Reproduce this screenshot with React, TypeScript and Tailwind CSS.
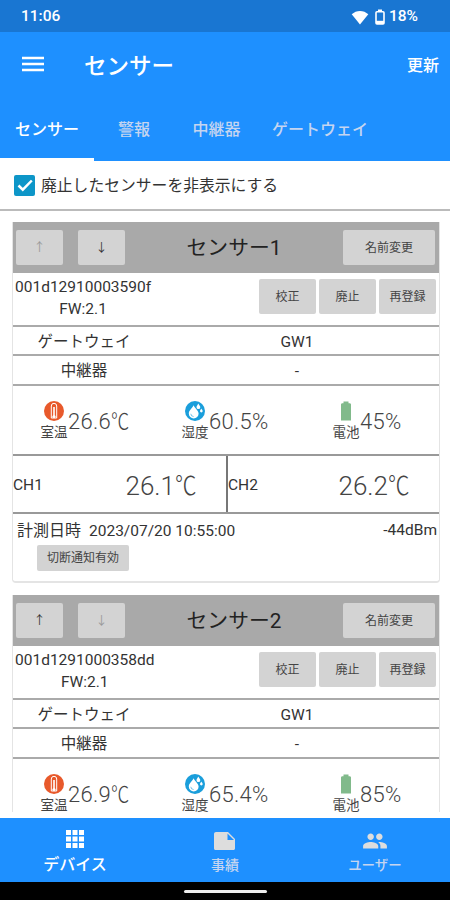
import type { ReactNode } from 'react'
import clsx from 'clsx'

type Sensor = {
  id: string
  name: string
  fw: string
  gateway: string
  relay: string
  temperature: string
  humidity: string
  battery: string
  channels?: string[]
  measuredAt?: string
  rssi?: string
}

const sensors: Sensor[] = [
  {
    id: '001d12910003590f',
    name: 'センサー1',
    fw: '2.1',
    gateway: 'GW1',
    relay: '-',
    temperature: '26.6',
    humidity: '60.5',
    battery: '45',
    channels: ['26.1', '26.2'],
    measuredAt: '2023/07/20 10:55:00',
    rssi: '-44dBm',
  },
  {
    id: '001d1291000358dd',
    name: 'センサー2',
    fw: '2.1',
    gateway: 'GW1',
    relay: '-',
    temperature: '26.9',
    humidity: '65.4',
    battery: '85',
  },
]

const ThermometerIcon = () => (
  <svg viewBox="0 0 20 20" className="size-5">
    <circle cx="10" cy="10" r="10" fill="#e8592b" />
    <path d="M7.300 17V5a2.700 2.700 0 0 1 5.400 0v12z" fill="#e8592b" stroke="#fff" strokeWidth="1" />
    <path d="M9.200 6h1.600v8.200a1.600 1.600 0 1 1-1.600 0z" fill="#fff" />
  </svg>
)

const HumidityIcon = () => (
  <svg viewBox="0 0 20 20" className="size-5">
    <circle cx="10" cy="10" r="10" fill="#1a9edb" />
    <path d="M8.600 4.200C7 7.500 3.800 9.300 3.800 12.500a4.900 4.900 0 0 0 9.800 0C13.600 9.500 10 7.500 8.600 4.200z" fill="#fff" />
    <path d="M13.300 2.500c-.6 1.500-1.800 2.300-1.800 3.700a1.900 1.900 0 0 0 3.800 0c0-1.400-1.400-2.200-2-3.700z" fill="#fff" />
    <path d="M16.300 7.500c-.4 1-1.300 1.600-1.300 2.600a1.350 1.350 0 0 0 2.700 0c0-1-.9-1.600-1.400-2.600z" fill="#fff" />
    <path d="M5.800 12.800a2.900 2.900 0 0 0 2.800 2.700" fill="none" stroke="#1a9edb" strokeWidth=".6" />
  </svg>
)

const BatteryIcon = () => (
  <svg viewBox="0 0 20 20" className="size-5">
    <path d="M7.500.5h5v1.700h1.200c.7 0 1.300.6 1.300 1.300V19.500H5V3.500c0-.7.600-1.300 1.300-1.300h1.200z" fill="#81ba8b" />
  </svg>
)

const Button = ({ children, className }: { children: ReactNode; className?: string }) => (
  <button className={clsx('flex items-center justify-center rounded-[2px] bg-[#d3d3d3] text-xs', className)}>
    {children}
  </button>
)

const Celsius = () => <span className="inline-block origin-left scale-x-[.83]">℃</span>

type MetricProps = { icon: ReactNode; label: string; value: string; unit: ReactNode; className?: string }

const Metric = ({ icon, label, value, unit, className }: MetricProps) => (
  <div className={clsx('flex items-center', className)}>
    <div className="flex w-7 flex-col items-center">
      {icon}
      <span className="pt-0.5 text-[13.5px] leading-[18px] text-[#444]">{label}</span>
    </div>
    <span className="pt-0.5 text-[22px] leading-8 font-light tracking-[.3px] text-[#444]">
      {value}
      {unit}
    </span>
  </div>
)

const Row = ({ label, value, className }: { label: string; value: string; className?: string }) => (
  <div className={clsx('flex items-center border-b-2 border-[#aaa] pt-1 text-center', className)}>
    <span className="w-[142px] text-[15.5px]">{label}</span>
    <span className="flex-1 text-[15.5px]">{value}</span>
  </div>
)

const SensorCard = ({ sensor, first }: { sensor: Sensor; first: boolean }) => (
  <section className="h-[361px] shrink-0 overflow-hidden rounded-b border-x border-b-2 border-[#e4e4e4] text-[#333]">
    <div className="flex h-[51px] items-center bg-[#a9a9a9] pr-1 pl-[3px]">
      <Button className={clsx('h-[35px] w-[47px]', first ? 'text-[#999]' : 'text-[#333]')}>↑</Button>
      <Button className={clsx('ml-[15px] h-[35px] w-[47px]', first ? 'text-[#333]' : 'text-[#999]')}>↓</Button>
      <h2 className="flex-1 pt-0.5 text-center text-[20.8px] text-[#222]">{sensor.name}</h2>
      <Button className="h-[35px] w-[92px] text-[#444]">名前変更</Button>
    </div>
    <div className="flex h-[54px] justify-between border-b-2 border-[#aaa] pr-[3px] pl-0.5">
      <div className="pt-[3px] text-center text-[15.5px] leading-[22px]">
        <p>{sensor.id}</p>
        <p>FW:{sensor.fw}</p>
      </div>
      <div className="flex gap-[3px] pt-1.5 text-[#444]">
        <Button className="h-[35px] w-[57px]">校正</Button>
        <Button className="h-[35px] w-[57px]">廃止</Button>
        <Button className="h-[35px] w-[57px]">再登録</Button>
      </div>
    </div>
    <Row label="ゲートウェイ" value={sensor.gateway} className="h-[29px]" />
    <Row label="中継器" value={sensor.relay} className="h-[30px]" />
    <div className="flex h-[70px] items-center border-b-2 border-[#999] pt-0.5 pl-[27px]">
      <Metric icon={<ThermometerIcon />} label="室温" value={sensor.temperature} unit={<Celsius />} className="w-[141px]" />
      <Metric icon={<HumidityIcon />} label="湿度" value={sensor.humidity} unit="%" className="w-[151px]" />
      <Metric icon={<BatteryIcon />} label="電池" value={sensor.battery} unit="%" />
    </div>
    {sensor.channels && (
      <div className="grid h-[58px] grid-cols-[215px_1fr] border-b-2 border-[#999]">
        {sensor.channels.map((value, i) => (
          <div key={i} className={clsx('flex items-center justify-between pt-1 pr-[25px]', i === 0 && 'border-r-2 border-[#777]')}>
            <span className="text-[15.5px]">CH{i + 1}</span>
            <span className="text-[26px] font-light text-[#444]">
              {value}
              <Celsius />
            </span>
          </div>
        ))}
      </div>
    )}
    {sensor.measuredAt && (
      <>
        <div className="flex justify-between pt-1.5 pr-0.5 pl-1 text-[15.5px] leading-[22px]">
          <div className="flex gap-2">
            <span className="text-base leading-[22px]">計測日時</span>
            <span>{sensor.measuredAt}</span>
          </div>
          <span className="-mt-px">{sensor.rssi}</span>
        </div>
        <Button className="mt-[3px] ml-6 h-[26px] w-[92px] text-[#444]">切断通知有効</Button>
      </>
    )}
  </section>
)

const tabs = [
  { label: 'センサー', className: 'w-[94px] border-white text-white' },
  { label: '警報', className: 'w-[80px] border-transparent text-[#c5d5f0]' },
  { label: '中継器', className: 'w-[85px] border-transparent text-[#c5d5f0]' },
  { label: 'ゲートウェイ', className: 'w-[122px] border-transparent text-[#c5d5f0]' },
]

export default function App() {
  return (
    <div className="flex h-[900px] w-[450px] flex-col overflow-hidden bg-white font-[Roboto,'Noto_Sans_CJK_JP',sans-serif]">
      <div className="flex h-8 shrink-0 items-center justify-between bg-[#1976d2] pt-0.5 pr-8 pl-[21px] text-[15.5px] font-medium text-white">
        <span>11:06</span>
        <div className="flex items-center">
          <svg viewBox="0 0 18 15" className="h-[15px] w-[18px]">
            <path d="M9 14.500.7 4.300C3 2.200 6 1 9 1s6 1.200 8.300 3.300z" fill="#fff" />
          </svg>
          <svg viewBox="0 0 10 16" className="mr-1 ml-1.5 h-4 w-2.5">
            <path d="M3 .5h4v1.800H3z" fill="#fff" />
            <rect x="1" y="2.700" width="8" height="12.300" rx="1" fill="none" stroke="#fff" strokeWidth="1.600" />
            <path d="M1 11.800h8V15H1z" fill="#fff" />
          </svg>
          <span>18%</span>
        </div>
      </div>

      <header className="shrink-0 bg-[#1e90ff] text-white">
        <div className="flex h-[66px] items-center pr-[11px] pl-[22px]">
          <svg viewBox="0 0 22 16" className="mb-0.5 h-4 w-[22px]">
            <path d="M0 2h22M0 8h22M0 14h22" stroke="#fff" strokeWidth="2.500" />
          </svg>
          <h1 className="ml-10 flex-1 pt-[3px] text-[22.5px] font-medium">センサー</h1>
          <button className="pt-0.5 text-base font-medium">更新</button>
        </div>
        <nav className="flex h-[63px]">
          {tabs.map((tab) => (
            <button key={tab.label} className={clsx('border-b-[3px] pt-[3px] text-base font-medium', tab.className)}>
              {tab.label}
            </button>
          ))}
        </nav>
      </header>

      <label className="flex h-[50px] shrink-0 items-center gap-1.5 border-b-2 border-[#bbb] pl-3.5 text-[15.8px] text-[#333]">
        <span className="flex size-[21px] items-center justify-center rounded-[2px] bg-[#0d96c8]">
          <svg viewBox="0 0 20 20" className="size-5">
            <path d="m3.500 10.500 4.300 4.200 9-9.200" fill="none" stroke="#fff" strokeWidth="2.500" />
          </svg>
        </span>
        <span className="pt-0.5">廃止したセンサーを非表示にする</span>
      </label>

      <main className="mb-1.5 flex min-h-0 flex-1 flex-col gap-3 overflow-hidden pt-[11px] pr-2.5 pl-3">
        {sensors.map((sensor, i) => (
          <SensorCard key={sensor.id} sensor={sensor} first={i === 0} />
        ))}
      </main>

      <nav className="grid h-16 shrink-0 grid-cols-3 bg-[#1e90ff] font-medium text-[#c5d5f0]">
        <button className="flex flex-col items-center pt-3 text-white">
          <svg viewBox="0 0 18 18" className="size-[18px]" fill="#fff">
            {[0, 6.5, 13].map((y) => [0, 6.5, 13].map((x) => <rect key={`${x}-${y}`} x={x} y={y} width="5" height="5" />))}
          </svg>
          <span className="mt-[5px] text-base leading-6">デバイス</span>
        </button>
        <button className="flex flex-col items-center pt-3.5">
          <svg viewBox="0 0 22 18" className="h-[18px] w-[22px]" fill="#ddd">
            <path d="M2 0h12l7 7v9.500c0 .8-.7 1.500-1.500 1.500h-18C.7 18 0 17.300 0 16.500V2C0 .9.900 0 2 0zm11.500 1.500V8H20z" fillRule="evenodd" />
          </svg>
          <span className="mt-[3px] text-sm leading-6">事績</span>
        </button>
        <button className="flex flex-col items-center pt-3.5">
          <svg viewBox="0 4 24 16" className="h-[18px] w-[26px]" fill="#ddd">
            <path d="M16 11c1.660 0 2.990-1.340 2.990-3S17.660 5 16 5s-3 1.340-3 3 1.340 3 3 3zm-8 0c1.660 0 2.990-1.340 2.990-3S9.660 5 8 5 5 6.340 5 8s1.340 3 3 3zm0 2c-2.330 0-7 1.170-7 3.500V19h14v-2.500c0-2.330-4.670-3.500-7-3.500zm8 0c-.29 0-.62.02-.97.05 1.160.84 1.970 1.970 1.970 3.450V19h6v-2.500c0-2.330-4.670-3.500-7-3.500z" />
          </svg>
          <span className="mt-[3px] text-[13.5px] leading-6">ユーザー</span>
        </button>
      </nav>

      <div className="flex h-[18px] shrink-0 justify-center bg-black pt-2">
        <div className="h-[3px] w-[83px] rounded-full bg-[#eee]" />
      </div>
    </div>
  )
}
